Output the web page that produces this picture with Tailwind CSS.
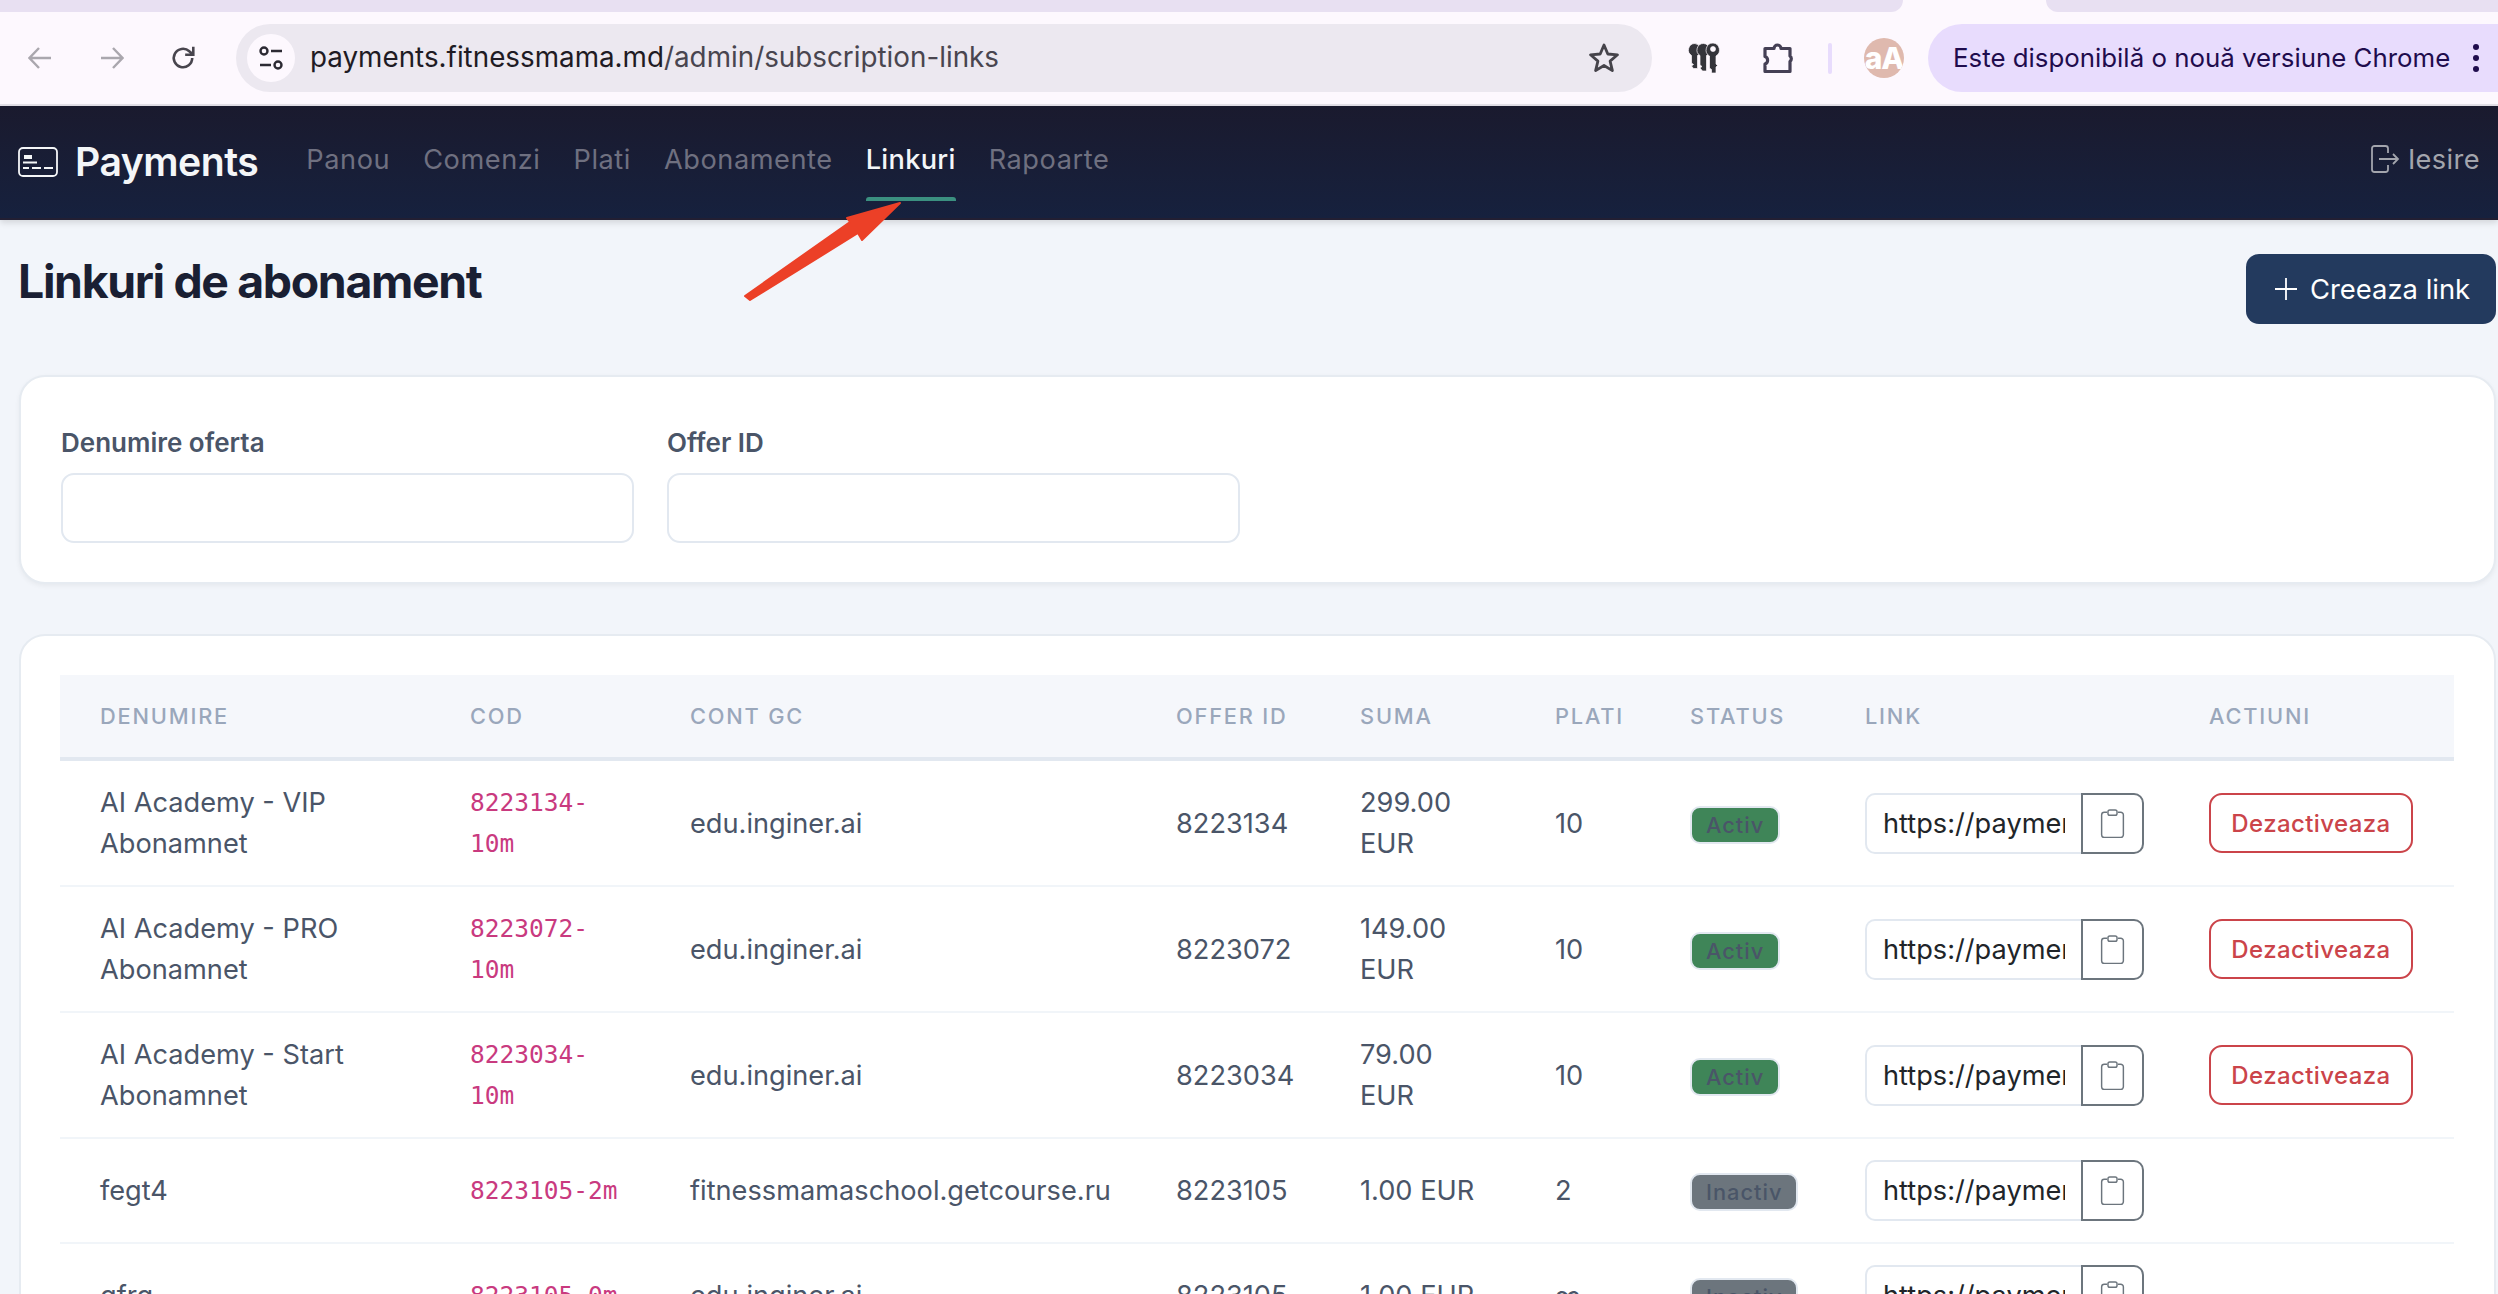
<!DOCTYPE html>
<html lang="en">
<head>
    <meta charset="UTF-8">
    <meta name="viewport" content="width=device-width, initial-scale=1.0">
    <title>Linkuri de abonament</title>
    <script src="https://cdn.jsdelivr.net/npm/@tailwindcss/browser@4"></script>
</head>
<body class="w-[2498px] h-[1294px] overflow-hidden bg-[#f2f5fa] text-[27.2px] leading-[41px] text-[#4a5568] [font-family:Inter,sans-serif] antialiased">

    <!-- Browser tab strip -->
    <div class="flex h-[12px] bg-[#fdf8fe]">
        <div class="w-[1903px] bg-[#e8e0f2] rounded-br-[12px]"></div>
        <div class="w-[143px]"></div>
        <div class="flex-1 bg-[#e8e0f2] rounded-bl-[12px]"></div>
    </div>

    <!-- Browser toolbar -->
    <div class="flex items-center h-[94px] bg-[#fdf8fe] border-b-2 border-[#e3e0e8]">
        <div class="flex items-center w-[236px] pl-[28px] gap-[48px]">
            <svg class="w-[24px] h-[24px]" viewBox="0 0 24 24" fill="none" stroke="#aaa7ae" stroke-width="2.4"><path d="M23 12H2M11 2 1.500 12 11 22"/></svg>
            <svg class="w-[24px] h-[24px]" viewBox="0 0 24 24" fill="none" stroke="#aaa7ae" stroke-width="2.4"><path d="M1 12h21M13 2l9.500 10L13 22"/></svg>
            <svg class="w-[26px] h-[26px] -ml-[2px]" viewBox="0 0 24 24" fill="none" stroke="#48454e" stroke-width="2.4"><path d="M20.500 12a8.500 8.500 0 1 1-2.700-6.200L21 8.500M21.500 1.500v7.500H14"/></svg>
        </div>
        <div class="flex items-center w-[1416px] h-[68px] rounded-full bg-[#ece8f0] pl-[11px] pr-[32px]">
            <div class="flex items-center justify-center w-[48px] h-[48px] rounded-full bg-[#fdf8fe]">
                <svg class="w-[26px] h-[26px]" viewBox="0 0 26 26" fill="none" stroke="#2c2a33" stroke-width="2.400"><circle cx="6" cy="6" r="3.500"/><path d="M13 6h11M2 20h11"/><circle cx="20" cy="20" r="3.500"/></svg>
            </div>
            <span class="ml-[15px] text-[27.800px] leading-none text-[#1f1b24] whitespace-nowrap">payments.fitnessmama.md<span class="text-[#49454f]">/admin/subscription-links</span></span>
            <svg class="ml-auto w-[32px] h-[32px]" viewBox="0 0 32 32" fill="none" stroke="#45434a" stroke-width="2.800" stroke-linejoin="round"><path d="m16 3 3.800 9 9.700.800-7.400 6.300 2.300 9.500L16 23.500l-8.400 5.100 2.300-9.500-7.400-6.300 9.700-.800z"/></svg>
        </div>
        <svg class="ml-[36px] w-[32px] h-[30px]" viewBox="0 0 32 30" fill="#34343a" stroke="#fdf8fe" stroke-width="0.700"><path d="M7 0.500a6.500 6.500 0 0 0-3.500 12V20l2 1.500L3.500 23l2 2.500h4V12.500A6.500 6.500 0 0 0 7 0.500z"/><path d="M15.500 0.500a6.500 6.500 0 0 0-3.500 12V22l2 1.500-2 1.500 2.500 3h4V12.500A6.500 6.500 0 0 0 15.500 0.500z"/><path fill-rule="evenodd" d="M25 0a7 7 0 0 0-3.500 13V25l2 1.500V30h4.500V24l1.500-1.500L28 21v-8A7 7 0 0 0 25 0zm0 3.500a2.500 2.500 0 1 1 0 5 2.500 2.500 0 0 1 0-5z"/></svg>
        <svg class="ml-[42px] w-[32px] h-[32px]" viewBox="0 0 32 32" fill="none" stroke="#454055" stroke-width="3.200" stroke-linejoin="round"><path d="M3 6.500h9a3.500 3.500 0 0 1 7 0h9v7.500a3.500 3.500 0 0 1 0 5.500V29.500H3V22a4 4 0 0 0 0-7.500z"/></svg>
        <div class="ml-[34px] w-[4px] h-[31px] rounded-full bg-[#e8dcfd]"></div>
        <div class="ml-[32px] flex items-center justify-center w-[40px] h-[40px] rounded-full overflow-hidden bg-[#dfb9ae]">
            <span class="text-[30px] leading-none font-extrabold text-white tracking-[-1px]">aA</span>
        </div>
        <div class="ml-[24px] flex items-center flex-1 h-[68px] rounded-l-full bg-[#e8dcfd] pl-[25px]">
            <span class="text-[25.850px] leading-none text-[#1f0c4d] whitespace-nowrap">Este disponibilă o nouă versiune Chrome</span>
            <div class="ml-[23px] flex flex-col gap-[5px]">
                <div class="w-[6px] h-[6px] rounded-full bg-[#1f0c4d]"></div>
                <div class="w-[6px] h-[6px] rounded-full bg-[#1f0c4d]"></div>
                <div class="w-[6px] h-[6px] rounded-full bg-[#1f0c4d]"></div>
            </div>
        </div>
    </div>

    <!-- Navbar -->
    <nav class="flex items-center h-[114px] pl-[18px] pr-[18px] bg-linear-to-b from-[#1a1a2e] to-[#16213e] shadow-[0_3px_6px_rgba(0,0,0,0.12)] border-b-2 border-[#221f33]">
        <svg class="w-[40px] h-[30px]" viewBox="0 0 40 30" fill="none" stroke="#f4f6f8" stroke-width="1.800"><rect x="1" y="1" width="38" height="28" rx="4"/><rect x="6" y="8" width="8" height="4" fill="#f4f6f8" stroke="none"/><path d="M5 15.500h14M5 21h32" stroke-width="2"/><path d="M5 21h32" stroke="#192038" stroke-width="2" stroke-dasharray="0 6 3 3"/></svg>
        <span class="ml-[17px] text-[39.200px] font-semibold leading-none text-[#f4f6f8] tracking-[-0.5px]">Payments</span>
        <div class="ml-[48px] -mt-[6px] flex items-start gap-[33px] text-[#6f7080] tracking-[0.55px]">
            <a>Panou</a>
            <a>Comenzi</a>
            <a>Plati</a>
            <a>Abonamente</a>
            <a class="relative text-[#f4f6f8] font-medium tracking-[0.3px]">Linkuri<span class="absolute left-0 right-0 top-[58px] h-[4px] rounded-t-[3px] bg-[#3b9080]"></span></a>
            <a>Rapoarte</a>
        </div>
        <a class="ml-auto -mt-[6px] flex items-center gap-[8px] text-[#a3a5ad]">
            <svg class="w-[30px] h-[28px]" viewBox="0 0 30 28" fill="none" stroke="#a3a5ad" stroke-width="1.800"><path d="M18 8V3.500A2.500 2.500 0 0 0 15.500 1h-11A2.500 2.500 0 0 0 2 3.500v21A2.500 2.500 0 0 0 4.500 27h11a2.500 2.500 0 0 0 2.500-2.500V20M9 14h19M23 9l5 5-5 5"/></svg>
            <span class="tracking-[0.4px]">Iesire</span>
        </a>
    </nav>

    <!-- Red annotation arrow, drawn over the page -->
    <svg class="absolute left-0 top-0 w-[2498px] h-[400px] pointer-events-none" viewBox="0 0 2498 400"><path d="M745 296 850 222 847 218 900 203 862 240 858 233 750 300z" fill="#ec4027" stroke="#ec4027" stroke-width="2" stroke-linejoin="round"/></svg>

    <main class="pl-[19px] pr-[2px]">
        <div class="flex items-start justify-between pt-[34px]">
            <h1 class="-ml-[1px] text-[46.400px] leading-[54px] font-bold text-[#1a1f33] tracking-[-1.350px]">Linkuri de abonament</h1>
            <button class="flex items-center gap-[12px] h-[70px] w-[250px] pl-[28px] rounded-[13px] bg-[#233a5e] text-white text-[27.400px]">
                <svg class="w-[24px] h-[24px]" viewBox="0 0 24 24" fill="none" stroke="white" stroke-width="1.800"><path d="M12 1v22M1 12h22"/></svg>
                Creeaza link
            </button>
        </div>

        <!-- Filters -->
        <section class="mt-[51px] h-[209px] rounded-[26px] bg-white border-2 border-[#e6ebf1] shadow-[0_2px_5px_rgba(0,0,0,0.05)] pt-[47px] pl-[40px]">
            <div class="flex gap-[33px]">
                <label class="block w-[573px]">
                    <span class="block text-[26px] leading-[38px] font-semibold text-[#4a5568]">Denumire oferta</span>
                    <input class="block mt-[11px] w-full h-[70px] rounded-[13px] bg-white border-2 border-[#e2e8f0]">
                </label>
                <label class="block w-[573px]">
                    <span class="block text-[26px] leading-[38px] font-semibold text-[#4a5568]">Offer ID</span>
                    <input class="block mt-[11px] w-full h-[70px] rounded-[13px] bg-white border-2 border-[#e2e8f0]">
                </label>
            </div>
        </section>

        <!-- Links table -->
        <section class="mt-[50px] rounded-[26px] bg-white border-2 border-[#e6ebf1] pt-[39px] pl-[39px] pr-[39px] h-[800px]">
            <table class="table-fixed border-collapse w-[2394px]">
                <colgroup>
                    <col class="w-[370px]"><col class="w-[220px]"><col class="w-[486px]"><col class="w-[184px]"><col class="w-[195px]"><col class="w-[135px]"><col class="w-[175px]"><col class="w-[344px]"><col class="w-[285px]">
                </colgroup>
                <thead class="bg-[#f5f7fb] border-b-[4px] border-[#e2e8f0] text-left text-[21.800px] uppercase tracking-[1.800px] text-[#9aa7bb]">
                    <tr class="h-[84px]">
                        <th class="pl-[40px] font-medium">Denumire</th>
                        <th class="pl-[40px] font-medium">Cod</th>
                        <th class="pl-[40px] font-medium">Cont GC</th>
                        <th class="pl-[40px] font-medium">Offer ID</th>
                        <th class="pl-[40px] font-medium">Suma</th>
                        <th class="pl-[40px] font-medium">Plati</th>
                        <th class="pl-[40px] font-medium">Status</th>
                        <th class="pl-[40px] font-medium">Link</th>
                        <th class="pl-[40px] font-medium">Actiuni</th>
                    </tr>
                </thead>
                <tbody>
                    <tr class="border-b-2 border-[#f1f5f9]">
                        <td class="py-[21px] pl-[40px] whitespace-nowrap">AI Academy - VIP<br>Abonamnet</td>
                        <td class="py-[21px] pl-[40px] whitespace-nowrap text-[24.500px] text-[#c93a7f] [font-family:'DejaVu_Sans_Mono',monospace]">8223134-<br>10m</td>
                        <td class="py-[21px] pl-[40px] whitespace-nowrap">edu.inginer.ai</td>
                        <td class="py-[21px] pl-[40px]">8223134</td>
                        <td class="py-[21px] pl-[40px] whitespace-nowrap">299.00<br>EUR</td>
                        <td class="py-[21px] pl-[40px]">10</td>
                        <td class="py-[21px] pl-[40px]"><span class="inline-block h-[38px] px-[14px] rounded-[10px] border-2 border-[#e2e8f0] bg-[#3f8558] text-[21.800px] leading-[34px] font-medium tracking-[1px] text-[#4a5568] align-middle">Activ</span></td>
                        <td class="py-[21px] pl-[40px]">
                            <div class="flex h-[61px] w-[279px]">
                                <input value="https://payments.fitnessmama.md/s/8223134-10m" readonly class="w-[216px] h-full pl-[16px] pr-[16px] text-[27.200px] text-[#212529] bg-white border-2 border-r-0 border-[#e2e8f0] rounded-l-[10px]">
                                <button class="flex items-center justify-center w-[63px] h-full border-2 border-[#6c757d] rounded-r-[10px]"><svg class="w-[25px] h-[29px]" viewBox="0 0 26 32" fill="none" stroke="#6c757d" stroke-width="1.600"><path d="M7 3.500H4A3 3 0 0 0 1 6.500v22a3 3 0 0 0 3 3h18a3 3 0 0 0 3-3v-22a3 3 0 0 0-3-3h-3"/><rect x="8" y="1" width="10" height="6" rx="2"/></svg></button>
                            </div>
                        </td>
                        <td class="py-[21px] pl-[40px]"><button class="w-[204px] h-[60px] rounded-[13px] border-2 border-[#cb444a] text-[#cb444a] text-[24px] font-medium tracking-[0.4px]">Dezactiveaza</button></td>
                    </tr>
                    <tr class="border-b-2 border-[#f1f5f9]">
                        <td class="py-[21px] pl-[40px] whitespace-nowrap">AI Academy - PRO<br>Abonamnet</td>
                        <td class="py-[21px] pl-[40px] whitespace-nowrap text-[24.500px] text-[#c93a7f] [font-family:'DejaVu_Sans_Mono',monospace]">8223072-<br>10m</td>
                        <td class="py-[21px] pl-[40px] whitespace-nowrap">edu.inginer.ai</td>
                        <td class="py-[21px] pl-[40px]">8223072</td>
                        <td class="py-[21px] pl-[40px] whitespace-nowrap">149.00<br>EUR</td>
                        <td class="py-[21px] pl-[40px]">10</td>
                        <td class="py-[21px] pl-[40px]"><span class="inline-block h-[38px] px-[14px] rounded-[10px] border-2 border-[#e2e8f0] bg-[#3f8558] text-[21.800px] leading-[34px] font-medium tracking-[1px] text-[#4a5568] align-middle">Activ</span></td>
                        <td class="py-[21px] pl-[40px]">
                            <div class="flex h-[61px] w-[279px]">
                                <input value="https://payments.fitnessmama.md/s/8223072-10m" readonly class="w-[216px] h-full pl-[16px] pr-[16px] text-[27.200px] text-[#212529] bg-white border-2 border-r-0 border-[#e2e8f0] rounded-l-[10px]">
                                <button class="flex items-center justify-center w-[63px] h-full border-2 border-[#6c757d] rounded-r-[10px]"><svg class="w-[25px] h-[29px]" viewBox="0 0 26 32" fill="none" stroke="#6c757d" stroke-width="1.600"><path d="M7 3.500H4A3 3 0 0 0 1 6.500v22a3 3 0 0 0 3 3h18a3 3 0 0 0 3-3v-22a3 3 0 0 0-3-3h-3"/><rect x="8" y="1" width="10" height="6" rx="2"/></svg></button>
                            </div>
                        </td>
                        <td class="py-[21px] pl-[40px]"><button class="w-[204px] h-[60px] rounded-[13px] border-2 border-[#cb444a] text-[#cb444a] text-[24px] font-medium tracking-[0.4px]">Dezactiveaza</button></td>
                    </tr>
                    <tr class="border-b-2 border-[#f1f5f9]">
                        <td class="py-[21px] pl-[40px] whitespace-nowrap">AI Academy - Start<br>Abonamnet</td>
                        <td class="py-[21px] pl-[40px] whitespace-nowrap text-[24.500px] text-[#c93a7f] [font-family:'DejaVu_Sans_Mono',monospace]">8223034-<br>10m</td>
                        <td class="py-[21px] pl-[40px] whitespace-nowrap">edu.inginer.ai</td>
                        <td class="py-[21px] pl-[40px]">8223034</td>
                        <td class="py-[21px] pl-[40px] whitespace-nowrap">79.00<br>EUR</td>
                        <td class="py-[21px] pl-[40px]">10</td>
                        <td class="py-[21px] pl-[40px]"><span class="inline-block h-[38px] px-[14px] rounded-[10px] border-2 border-[#e2e8f0] bg-[#3f8558] text-[21.800px] leading-[34px] font-medium tracking-[1px] text-[#4a5568] align-middle">Activ</span></td>
                        <td class="py-[21px] pl-[40px]">
                            <div class="flex h-[61px] w-[279px]">
                                <input value="https://payments.fitnessmama.md/s/8223034-10m" readonly class="w-[216px] h-full pl-[16px] pr-[16px] text-[27.200px] text-[#212529] bg-white border-2 border-r-0 border-[#e2e8f0] rounded-l-[10px]">
                                <button class="flex items-center justify-center w-[63px] h-full border-2 border-[#6c757d] rounded-r-[10px]"><svg class="w-[25px] h-[29px]" viewBox="0 0 26 32" fill="none" stroke="#6c757d" stroke-width="1.600"><path d="M7 3.500H4A3 3 0 0 0 1 6.500v22a3 3 0 0 0 3 3h18a3 3 0 0 0 3-3v-22a3 3 0 0 0-3-3h-3"/><rect x="8" y="1" width="10" height="6" rx="2"/></svg></button>
                            </div>
                        </td>
                        <td class="py-[21px] pl-[40px]"><button class="w-[204px] h-[60px] rounded-[13px] border-2 border-[#cb444a] text-[#cb444a] text-[24px] font-medium tracking-[0.4px]">Dezactiveaza</button></td>
                    </tr>
                    <tr class="border-b-2 border-[#f1f5f9]">
                        <td class="py-[21px] pl-[40px] whitespace-nowrap">fegt4</td>
                        <td class="py-[21px] pl-[40px] whitespace-nowrap text-[24.500px] text-[#c93a7f] [font-family:'DejaVu_Sans_Mono',monospace]">8223105-2m</td>
                        <td class="py-[21px] pl-[40px] whitespace-nowrap">fitnessmamaschool.getcourse.ru</td>
                        <td class="py-[21px] pl-[40px]">8223105</td>
                        <td class="py-[21px] pl-[40px] whitespace-nowrap">1.00 EUR</td>
                        <td class="py-[21px] pl-[40px]">2</td>
                        <td class="py-[21px] pl-[40px]"><span class="inline-block h-[38px] px-[14px] rounded-[10px] border-2 border-[#e2e8f0] bg-[#6c757d] text-[21.800px] leading-[34px] font-medium tracking-[1px] text-[#4a5568] align-middle">Inactiv</span></td>
                        <td class="py-[21px] pl-[40px]">
                            <div class="flex h-[61px] w-[279px]">
                                <input value="https://payments.fitnessmama.md/s/8223105-2m" readonly class="w-[216px] h-full pl-[16px] pr-[16px] text-[27.200px] text-[#212529] bg-white border-2 border-r-0 border-[#e2e8f0] rounded-l-[10px]">
                                <button class="flex items-center justify-center w-[63px] h-full border-2 border-[#6c757d] rounded-r-[10px]"><svg class="w-[25px] h-[29px]" viewBox="0 0 26 32" fill="none" stroke="#6c757d" stroke-width="1.600"><path d="M7 3.500H4A3 3 0 0 0 1 6.500v22a3 3 0 0 0 3 3h18a3 3 0 0 0 3-3v-22a3 3 0 0 0-3-3h-3"/><rect x="8" y="1" width="10" height="6" rx="2"/></svg></button>
                            </div>
                        </td>
                        <td class="py-[21px] pl-[40px]"></td>
                    </tr>
                    <tr class="border-b-2 border-[#f1f5f9]">
                        <td class="py-[21px] pl-[40px] whitespace-nowrap">gfrg</td>
                        <td class="py-[21px] pl-[40px] whitespace-nowrap text-[24.500px] text-[#c93a7f] [font-family:'DejaVu_Sans_Mono',monospace]">8223105-0m</td>
                        <td class="py-[21px] pl-[40px] whitespace-nowrap">edu.inginer.ai</td>
                        <td class="py-[21px] pl-[40px]">8223105</td>
                        <td class="py-[21px] pl-[40px] whitespace-nowrap">1.00 EUR</td>
                        <td class="py-[21px] pl-[40px]">∞</td>
                        <td class="py-[21px] pl-[40px]"><span class="inline-block h-[38px] px-[14px] rounded-[10px] border-2 border-[#e2e8f0] bg-[#6c757d] text-[21.800px] leading-[34px] font-medium tracking-[1px] text-[#4a5568] align-middle">Inactiv</span></td>
                        <td class="py-[21px] pl-[40px]">
                            <div class="flex h-[61px] w-[279px]">
                                <input value="https://payments.fitnessmama.md/s/8223105-0m" readonly class="w-[216px] h-full pl-[16px] pr-[16px] text-[27.200px] text-[#212529] bg-white border-2 border-r-0 border-[#e2e8f0] rounded-l-[10px]">
                                <button class="flex items-center justify-center w-[63px] h-full border-2 border-[#6c757d] rounded-r-[10px]"><svg class="w-[25px] h-[29px]" viewBox="0 0 26 32" fill="none" stroke="#6c757d" stroke-width="1.600"><path d="M7 3.500H4A3 3 0 0 0 1 6.500v22a3 3 0 0 0 3 3h18a3 3 0 0 0 3-3v-22a3 3 0 0 0-3-3h-3"/><rect x="8" y="1" width="10" height="6" rx="2"/></svg></button>
                            </div>
                        </td>
                        <td class="py-[21px] pl-[40px]"></td>
                    </tr>
                </tbody>
            </table>
        </section>
    </main>

</body>
</html>
